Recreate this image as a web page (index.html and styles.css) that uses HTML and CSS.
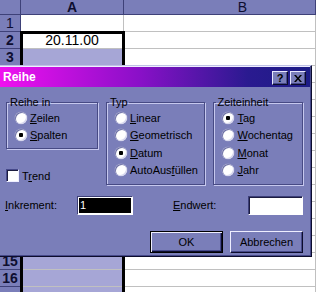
FILE: index.html
```html
<!DOCTYPE html>
<html lang="de">
<head>
    <meta charset="UTF-8">
    <title>Reihe</title>
    <link rel="stylesheet" href="styles.css">
</head>
<body>
    <div class="sheet">
        <div class="head corner"></div><div class="head col sel">A</div><div class="head col col-b">B</div>
        <div class="head row">1</div><div class="cell"></div><div class="cell"></div>
        <div class="head row sel">2</div><div class="cell active">20.11.00</div><div class="cell"></div>
        <div class="head row sel">3</div><div class="cell marked"></div><div class="cell"></div>
        <!-- rows 4 to 14 sit under the dialog -->
        <div class="head row sel"></div><div class="cell marked"></div><div class="cell"></div>
        <div class="head row sel"></div><div class="cell marked"></div><div class="cell"></div>
        <div class="head row sel"></div><div class="cell marked"></div><div class="cell"></div>
        <div class="head row sel"></div><div class="cell marked"></div><div class="cell"></div>
        <div class="head row sel"></div><div class="cell marked"></div><div class="cell"></div>
        <div class="head row sel"></div><div class="cell marked"></div><div class="cell"></div>
        <div class="head row sel"></div><div class="cell marked"></div><div class="cell"></div>
        <div class="head row sel"></div><div class="cell marked"></div><div class="cell"></div>
        <div class="head row sel"></div><div class="cell marked"></div><div class="cell"></div>
        <div class="head row sel"></div><div class="cell marked"></div><div class="cell"></div>
        <div class="head row sel"></div><div class="cell marked"></div><div class="cell"></div>
        <div class="head row sel">15</div><div class="cell marked"></div><div class="cell"></div>
        <div class="head row sel">16</div><div class="cell marked"></div><div class="cell"></div>
        <div class="head row"></div><div class="cell marked"></div><div class="cell"></div>
    </div>
    <div class="selection"></div>

    <div class="dialog">
        <div class="titlebar">
            <span class="title">Reihe</span>
            <span class="tbtn">?</span>
            <span class="tbtn close">
                <svg width="8" height="7" viewBox="0 0 8 7"><path d="M0 0h2l2 2.5L6 0h2L5 3.5 8 7H6L4 4.5 2 7H0l3-3.5z" fill="#000"/></svg>
            </span>
        </div>
        <div class="body">
            <div class="groups">
                <div class="left">
                    <fieldset class="box box-small">
                        <legend>Reihe in</legend>
                        <label class="opt"><input type="radio" name="in"><span><u>Z</u>eilen</span></label>
                        <label class="opt"><input type="radio" name="in" checked><span><u>S</u>palten</span></label>
                    </fieldset>
                    <label class="trend"><input type="checkbox"><span>T<u>r</u>end</span></label>
                </div>
                <fieldset class="box box-typ">
                    <legend>Typ</legend>
                    <label class="opt"><input type="radio" name="typ"><span><u>L</u>inear</span></label>
                    <label class="opt"><input type="radio" name="typ"><span><u>G</u>eometrisch</span></label>
                    <label class="opt"><input type="radio" name="typ" checked><span><u>D</u>atum</span></label>
                    <label class="opt"><input type="radio" name="typ"><span>AutoAus<u>f</u>üllen</span></label>
                </fieldset>
                <fieldset class="box box-zeit">
                    <legend>Zeiteinheit</legend>
                    <label class="opt"><input type="radio" name="zeit" checked><span><u>T</u>ag</span></label>
                    <label class="opt"><input type="radio" name="zeit"><span><u>W</u>ochentag</span></label>
                    <label class="opt"><input type="radio" name="zeit"><span><u>M</u>onat</span></label>
                    <label class="opt"><input type="radio" name="zeit"><span><u>J</u>ahr</span></label>
                </fieldset>
            </div>
            <div class="values">
                <label class="lbl lbl-ink"><u>I</u>nkrement:</label>
                <div class="field field-ink">1</div>
                <label class="lbl lbl-end"><u>E</u>ndwert:</label>
                <div class="field"></div>
            </div>
            <div class="buttons">
                <button class="btn default">OK</button>
                <button class="btn">Abbrechen</button>
            </div>
        </div>
    </div>
</body>
</html>
```

FILE: styles.css
```css
body {
    margin: 0;
    width: 316px;
    height: 292px;
    overflow: hidden;
    position: relative;
    background-color: #ffffff;
    font-family: "Liberation Sans", Arial, sans-serif;
}

/* spreadsheet underneath */
.sheet {
    display: grid;
    grid-template-columns: 21px 103px 192px;
    grid-template-rows: 15px repeat(17, 17px);
    width: 316px;
    height: 292px;
    overflow: hidden;
}
.head {
    box-sizing: border-box;
    background-color: #7a7eb9;
    border-right: 1px solid #3e4178;
    border-bottom: 1px solid #3e4178;
    color: #0e0e30;
    font-size: 14px;
    line-height: 15px;
    text-align: center;
}
.head.col {
    line-height: 14px;
}
.head.col-b {
    padding-left: 46px;
}
.head.sel {
    font-weight: bold;
}
.head.row {
    line-height: 17px;
}
.cell {
    box-sizing: border-box;
    border-right: 1px solid #c0c0c0;
    border-bottom: 1px solid #c0c0c0;
    font-size: 14px;
    line-height: 17px;
    text-align: center;
    color: #000;
}
.cell.marked {
    background-color: #a6a6d6;
}
.selection {
    position: absolute;
    left: 20px;
    top: 31px;
    width: 99px;
    height: 258px;
    border: 3px solid #000;
    border-bottom: 0;
}

/* dialog */
.dialog {
    position: absolute;
    left: -3px;
    top: 65px;
    width: 315px;
    height: 192px;
    box-sizing: border-box;
    padding: 1px;
    background-color: #7a7eb9;
    border: 1px solid;
    border-color: #bfc1e6 #0c0c2c #0c0c2c #bfc1e6;
    box-shadow: inset -1px -1px 0 #46498a, inset 1px 1px 0 #eeeeff;
    font-size: 11px;
    color: #000;
}
.titlebar {
    height: 20px;
    display: flex;
    align-items: center;
    gap: 2px;
    padding: 0 4px 0 4px;
    background: linear-gradient(to right, #f010f0, #8a10c8 45%, #2a1a90 80%, #1c1c86);
}
.title {
    flex: 1;
    color: #fff;
    font-weight: bold;
    font-size: 12px;
}
.tbtn {
    width: 16px;
    height: 14px;
    box-sizing: border-box;
    margin-top: 2px;
    display: flex;
    align-items: center;
    justify-content: center;
    background-color: #7a7eb9;
    border: 1px solid;
    border-color: #e8e8ff #0c0c2c #0c0c2c #e8e8ff;
    box-shadow: inset -1px -1px 0 #46498a;
    font-weight: bold;
    font-size: 11px;
    line-height: 12px;
}
.body {
    padding: 9px 7px 0 7px;
}
.groups {
    display: flex;
    gap: 8px;
}
.left {
    width: 92px;
}
.box {
    margin: 0;
    padding: 0 0 0 2px;
    box-sizing: border-box;
    border: 1px solid #474a84;
    box-shadow: 1px 1px 0 #c6c8ee, inset 1px 1px 0 #c6c8ee;
}
.box legend {
    padding: 0 1px;
    line-height: 13px;
}
.box-small {
    width: 92px;
    height: 53px;
}
.box-typ {
    width: 100px;
    height: 89px;
}
.box-zeit {
    width: 90px;
    height: 89px;
}
.opt {
    display: flex;
    align-items: center;
    gap: 3px;
    height: 17.5px;
    padding-left: 6px;
}
.opt input {
    appearance: none;
    margin: 0;
    width: 12px;
    height: 12px;
    border-radius: 50%;
    background-color: #fff;
    box-shadow: inset 1px 1px 0 #6d70a6, inset -1px -1px 0 #d6d6ee, 0 0 0 0.5px #9a9cc8;
}
.opt input:checked {
    background: radial-gradient(circle, #000 0, #000 2px, #fff 2.5px);
}
.trend {
    display: flex;
    align-items: center;
    gap: 3px;
    height: 13px;
    margin-top: 20px;
}
.trend input {
    appearance: none;
    margin: 0;
    width: 13px;
    height: 13px;
    background-color: #fff;
    border: 1px solid;
    border-color: #46498a #eeeeff #eeeeff #46498a;
    box-shadow: inset 1px 1px 0 #1c1c40;
}
.values {
    display: flex;
    align-items: center;
    margin-top: 11px;
    height: 19px;
}
.lbl {
    box-sizing: border-box;
    margin-top: -2px;
}
.lbl-ink {
    width: 72px;
    margin-left: -1px;
}
.lbl-end {
    width: 75px;
}
.field {
    box-sizing: border-box;
    width: 55px;
    height: 19px;
    border: 1px solid;
    border-color: #3c3f78 #ffffff #ffffff #3c3f78;
    background-color: #fff;
    box-shadow: inset 1px 1px 0 #1c1c40;
    line-height: 17px;
}
.field-ink {
    width: 56px;
    margin-right: 40px;
    background-color: #000;
    color: #fff;
    padding-left: 2px;
    box-shadow: inset 0 0 0 1px #fff;
}
.buttons {
    display: flex;
    justify-content: flex-end;
    gap: 7px;
    margin-top: 16px;
}
.btn {
    width: 73px;
    height: 22px;
    padding: 0;
    font-family: "Liberation Sans", Arial, sans-serif;
    font-size: 11px;
    color: #000;
    background-color: #7a7eb9;
    border: 1px solid;
    border-color: #eeeeff #0c0c2c #0c0c2c #eeeeff;
    box-shadow: inset -1px -1px 0 #46498a;
}
.btn.default {
    border-color: #000;
    box-shadow: inset 1px 1px 0 #eeeeff, inset -1px -1px 0 #0c0c2c, inset -2px -2px 0 #46498a;
}
```
